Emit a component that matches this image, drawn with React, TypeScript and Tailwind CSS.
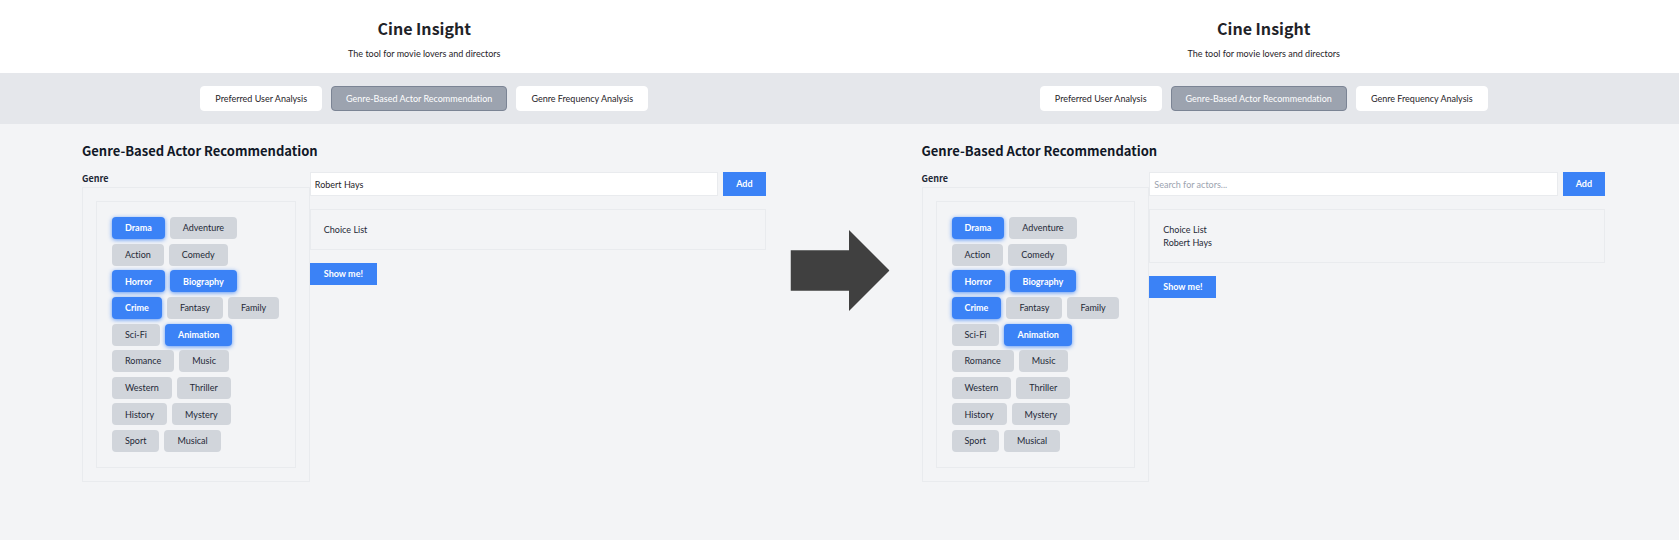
import { useState } from "react";

const genreRows = [
  ["Drama", "Adventure"],
  ["Action", "Comedy"],
  ["Horror", "Biography"],
  ["Crime", "Fantasy", "Family"],
  ["Sci-Fi", "Animation"],
  ["Romance", "Music"],
  ["Western", "Thriller"],
  ["History", "Mystery"],
  ["Sport", "Musical"],
];

const tabs = [
  "Preferred User Analysis",
  "Genre-Based Actor Recommendation",
  "Genre Frequency Analysis",
];

function GenreButton({ name, active, onClick }: { name: string; active: boolean; onClick: () => void }) {
  return (
    <button
      type="button"
      aria-pressed={active}
      onClick={onClick}
      className={
        active
          ? "h-[22px] rounded-[4px] bg-[#3b82f6] px-[13px] font-bold text-white shadow-[0_1px_4px_rgba(59,130,246,0.8)]"
          : "h-[22px] rounded-[4px] bg-[#d1d5db] px-[13px] text-[#1f2937]"
      }
    >
      {name}
    </button>
  );
}

function Screen({ query, initialActors }: { query: string; initialActors: string[] }) {
  const [tab, setTab] = useState(tabs[1]);
  const [selected, setSelected] = useState(["Drama", "Horror", "Biography", "Crime", "Animation"]);
  const [text, setText] = useState(query);
  const [actors, setActors] = useState(initialActors);

  const toggle = (name: string) =>
    setSelected((s) => (s.includes(name) ? s.filter((g) => g !== name) : [...s, name]));

  const add = () => {
    if (!text.trim()) return;
    setActors([...actors, text.trim()]);
    setText("");
  };

  return (
    <section className="min-w-0 flex-1">
      <header className="bg-white pt-[16px] pb-[12px] pl-[9px] text-center">
        <h1 className="font-['Noto_Sans_CJK_KR',sans-serif] text-[16px] leading-[24px] font-bold text-[#1f2328]">
          Cine Insight
        </h1>
        <p className="mt-[7px] leading-[14px] text-[#1f2328]">The tool for movie lovers and directors</p>
      </header>

      <nav className="flex justify-center gap-[9px] bg-[#e5e7eb] py-[13px] pl-[9px]">
        {tabs.map((t) => (
          <button
            key={t}
            type="button"
            onClick={() => setTab(t)}
            className={
              t === tab
                ? "h-[25px] rounded-[4px] border border-[#7b8494] bg-[#9ca3af] px-[14px] text-white"
                : "h-[25px] rounded-[4px] border border-white bg-white px-[14px] text-[#1f2328]"
            }
          >
            {t}
          </button>
        ))}
      </nav>

      <main className="pt-[17px] pr-[74px] pl-[82px]">
        <h2 className="font-['Noto_Sans_CJK_KR',sans-serif] text-[13px] leading-[20px] font-bold text-[#111827]">
          Genre-Based Actor Recommendation
        </h2>
        <div className="mt-[11px] flex items-start">
          <div className="w-1/3">
            <h3 className="font-['Noto_Sans_CJK_KR',sans-serif] leading-[13px] font-bold text-[#1f2937]">Genre</h3>
            <div className="mt-[2px] border border-[#e9ebee] p-[13px]">
              <div className="flex h-[267px] flex-col justify-between border border-[#e9ebee] p-[15px]">
                {genreRows.map((row) => (
                  <div key={row[0]} className="flex gap-[5px]">
                    {row.map((g) => (
                      <GenreButton key={g} name={g} active={selected.includes(g)} onClick={() => toggle(g)} />
                    ))}
                  </div>
                ))}
              </div>
            </div>
          </div>

          <div className="min-w-0 flex-1">
            <div className="flex gap-[5px]">
              <input
                type="text"
                aria-label="Search for actors"
                value={text}
                placeholder="Search for actors..."
                onChange={(e) => setText(e.target.value)}
                className="h-[24px] min-w-0 flex-1 border border-[#e9ebee] bg-white px-[4px] text-[#1f2328] outline-none placeholder:text-[#9ca3af]"
              />
              <button type="button" onClick={add} className="h-[24px] bg-[#3b82f6] px-[13px] font-bold text-white">
                Add
              </button>
            </div>
            <div className="mt-[13px] border border-[#e9ebee] p-[13px] leading-[13px] text-[#1f2937]">
              <p>Choice List</p>
              <ul>
                {actors.map((a) => (
                  <li key={a}>{a}</li>
                ))}
              </ul>
            </div>
            <button type="button" className="mt-[13px] h-[22px] bg-[#3b82f6] px-[14px] font-bold text-white">
              Show me!
            </button>
          </div>
        </div>
      </main>
    </section>
  );
}

export default function App() {
  return (
    <div className="relative flex min-h-screen bg-[#f3f4f6] font-['Lato','Noto_Sans',sans-serif] text-[9px] [font-variant-ligatures:none]">
      <Screen query="Robert Hays" initialActors={[]} />
      <Screen query="" initialActors={["Robert Hays"]} />
      <svg
        aria-hidden="true"
        viewBox="0 0 99 81"
        className="pointer-events-none absolute top-[230px] left-1/2 h-[81px] w-[99px] -translate-x-1/2"
      >
        <path d="M0 20.3H58.5V0L99 40.5L58.5 81V60.7H0Z" fill="#404040" />
      </svg>
    </div>
  );
}
